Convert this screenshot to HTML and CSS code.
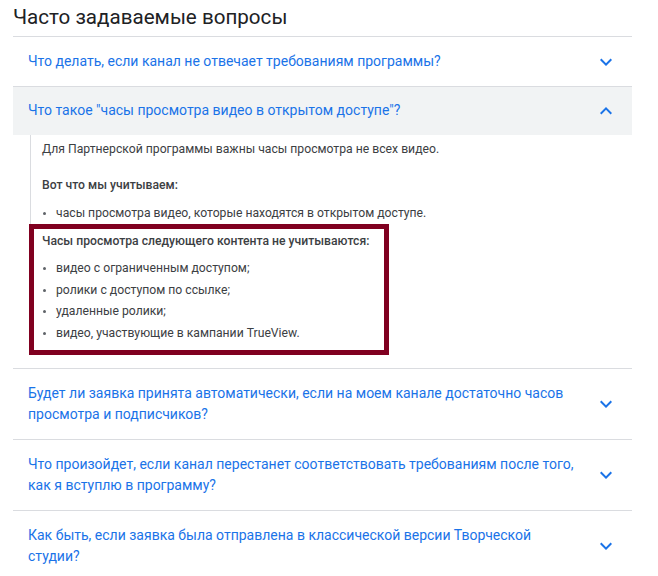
FILE: index.html
```html
<!DOCTYPE html>
<html lang="ru">
<head>
<meta charset="utf-8">
<title>Часто задаваемые вопросы</title>
<link rel="stylesheet" href="styles.css">
</head>
<body>
<section class="faq">
  <h1 class="faq-title">Часто задаваемые вопросы</h1>

  <div class="item">
    <div class="question">
      <span class="q-text">Что делать, если канал не отвечает требованиям программы?</span>
      <svg class="chev" viewBox="0 0 24 24" width="24" height="24"><path d="M16.59 8.59L12 13.17 7.41 8.59 6 10l6 6 6-6z"/></svg>
    </div>
  </div>

  <div class="item open">
    <div class="question">
      <span class="q-text">Что такое "часы просмотра видео в открытом доступе"?</span>
      <svg class="chev" viewBox="0 0 24 24" width="24" height="24"><path d="M7.41 15.41L12 10.83l4.59 4.58L18 14l-6-6-6 6z"/></svg>
    </div>
    <div class="answer">
      <div class="answer-main">
        <p class="para">Для Партнерской программы важны часы просмотра не всех видео.</p>
        <p class="para bold">Вот что мы учитываем:</p>
        <ul class="list">
          <li>часы просмотра видео, которые находятся в открытом доступе.</li>
        </ul>
      </div>
      <div class="highlight">
        <p class="bold">Часы просмотра следующего контента не учитываются:</p>
        <ul class="list tight">
          <li>видео с ограниченным доступом;</li>
          <li>ролики с доступом по ссылке;</li>
          <li>удаленные ролики;</li>
          <li>видео, участвующие в кампании TrueView.</li>
        </ul>
      </div>
    </div>
  </div>

  <div class="item">
    <div class="question">
      <span class="q-text">Будет ли заявка принята автоматически, если на моем канале достаточно часов просмотра и подписчиков?</span>
      <svg class="chev" viewBox="0 0 24 24" width="24" height="24"><path d="M16.59 8.59L12 13.17 7.41 8.59 6 10l6 6 6-6z"/></svg>
    </div>
  </div>

  <div class="item">
    <div class="question">
      <span class="q-text">Что произойдет, если канал перестанет соответствовать требованиям после того, как я вступлю в программу?</span>
      <svg class="chev" viewBox="0 0 24 24" width="24" height="24"><path d="M16.59 8.59L12 13.17 7.41 8.59 6 10l6 6 6-6z"/></svg>
    </div>
  </div>

  <div class="item">
    <div class="question">
      <span class="q-text">Как быть, если заявка была отправлена в классической версии Творческой студии?</span>
      <svg class="chev" viewBox="0 0 24 24" width="24" height="24"><path d="M16.59 8.59L12 13.17 7.41 8.59 6 10l6 6 6-6z"/></svg>
    </div>
  </div>
</section>
</body>
</html>
```

FILE: styles.css
```css
* { box-sizing: border-box; }

html, body {
  margin: 0;
  padding: 0;
  background: #ffffff;
}

body {
  font-family: Roboto, "Noto Sans", "Liberation Sans", sans-serif;
  color: #3c4043;
}

.faq {
  margin: 0 26px 0 13px;
}

.faq-title {
  margin: 0;
  padding: 3px 0 5px 0;
  font-size: 20.6px;
  line-height: 28px;
  font-weight: 400;
  color: #202124;
}

.item {
  border-top: 1px solid #dadce0;
}

.question {
  display: flex;
  align-items: center;
  gap: 14px;
  padding: 14px 14px 14px 15px;
}

.item.open .question {
  background: #f1f3f4;
  padding-top: 13px;
}

.q-text {
  flex: 1;
  font-size: 14px;
  line-height: 21px;
  color: #1a73e8;
}

.chev {
  flex: none;
  margin: -2px 0;
  fill: #1a73e8;
}

.answer {
  padding: 0 0 13px 16px;
  font-size: 12.2px;
  line-height: 21px;
  color: #3c4043;
}

.answer-main {
  margin-left: 1px;
  border-left: 1px solid #dadce0;
  padding: 4px 0 0 11px;
}

.para {
  margin: 0 0 15px 0;
}

.answer-main .para.bold {
  margin-bottom: 7px;
}

.bold {
  margin: 0;
  font-weight: 500;
  color: #3c4043;
}

.list {
  margin: 0;
  padding-left: 14px;
}

.list li {
  line-height: 21px;
}

.list li::marker {
  font-size: 10px;
  color: #5f6368;
}

.highlight {
  width: 360px;
  border: 5px solid #800020;
  padding: 2px 8px 5px 8px;
}

.highlight .bold {
  margin-bottom: 6px;
}

.list.tight li {
  line-height: 21.7px;
}
```
